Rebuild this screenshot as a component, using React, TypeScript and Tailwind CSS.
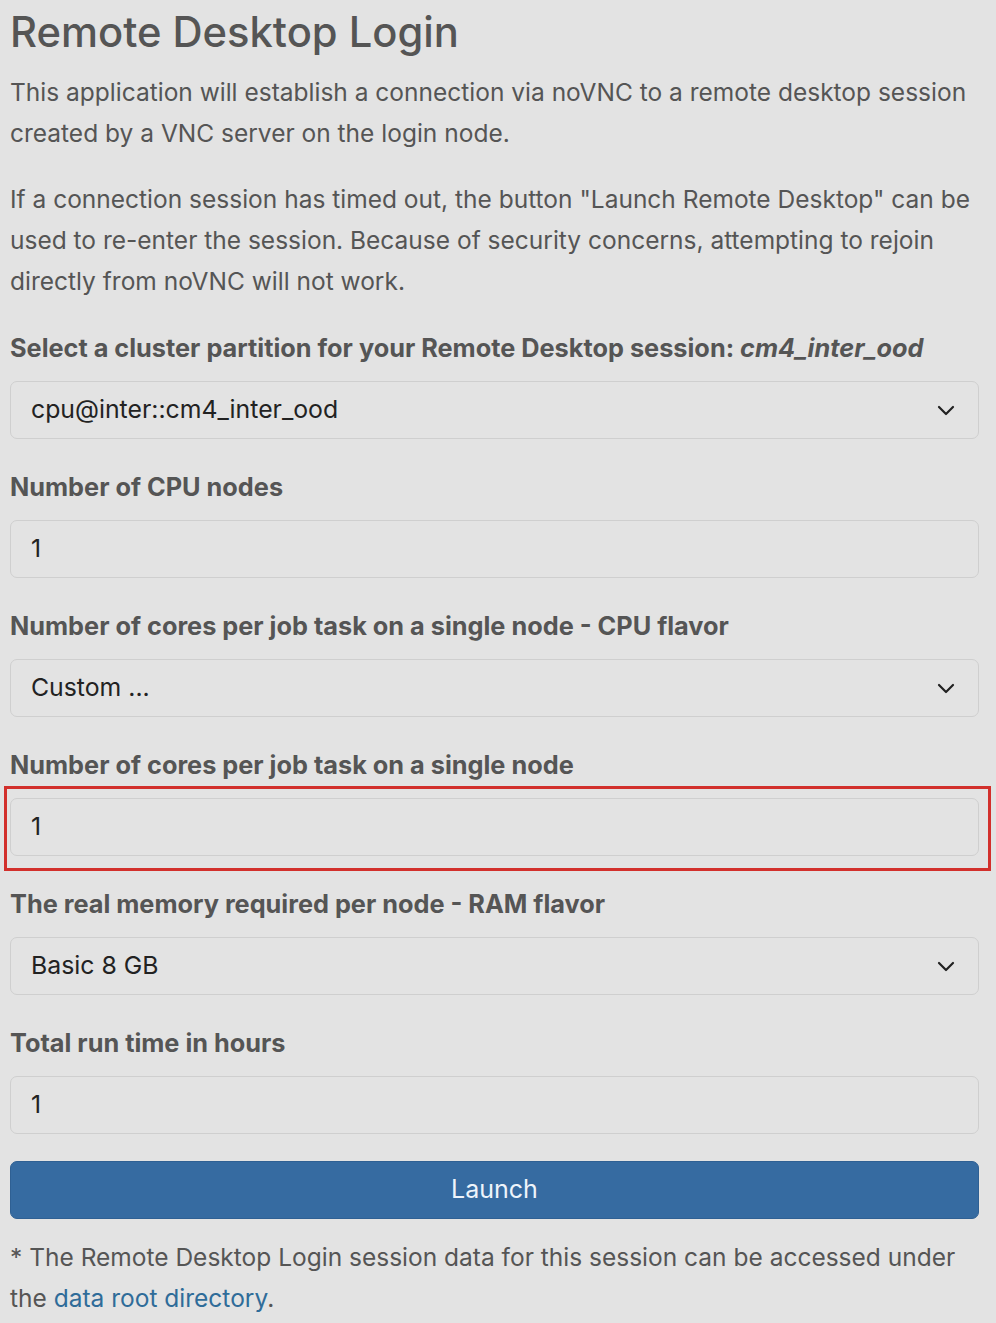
import React from "react";

const Chevron = () => (
  <svg width="18" height="11" viewBox="0 0 18 11" fill="none" className="shrink-0">
    <path d="M2 2l7 7 7-7" stroke="#222" strokeWidth="2.2" strokeLinecap="round" strokeLinejoin="round" />
  </svg>
);

const Label = ({ children }: { children: React.ReactNode }) => (
  <div className="h-[41px] flex items-center font-bold text-[25.3px] text-[#555] leading-[41px] whitespace-nowrap">{children}</div>
);

const Box = ({ value, select }: { value: string; select?: boolean }) => (
  <div className="h-[58px] rounded-[7px] border border-[#cfcfcf] flex items-center justify-between pl-[20px] pr-[23px] text-[24.8px] text-[#222]">
    <span>{value}</span>
    {select ? <Chevron /> : null}
  </div>
);

const Group = ({ label, children }: { label: React.ReactNode; children: React.ReactNode }) => (
  <div className="mt-[27px] flex flex-col gap-[13px]">
    <Label>{label}</Label>
    {children}
  </div>
);

export default function App() {
  return (
    <div className="min-h-[1323px] w-[996px] bg-[#e3e3e3] text-[#555] pl-[10px] pr-[17px] overflow-hidden" style={{ fontFamily: "Inter, 'Liberation Sans', sans-serif" }}>
      <h1 className="text-[41.7px] font-medium leading-[48px] pt-[8px] text-[#555] whitespace-nowrap">Remote Desktop Login</h1>
      <div className="text-[24.5px] leading-[41px] mt-[16px]">
        <p>This application will establish a connection via noVNC to a remote desktop session created by a VNC server on the login node.</p>
        <p className="mt-[25px]">
          If a connection session has timed out, the button "Launch Remote Desktop" can be used to re-enter the session. Because of security concerns, attempting to rejoin directly from noVNC will not work.
        </p>
      </div>
      <div className="mt-[-2px]">
        <Group
          label={
            <>
              Select a cluster partition for your Remote Desktop session:&nbsp;<i>cm4_inter_ood</i>
            </>
          }
        >
          <Box value="cpu@inter::cm4_inter_ood" select />
        </Group>
      </div>
      <Group label="Number of CPU nodes">
        <Box value="1" />
      </Group>
      <Group label="Number of cores per job task on a single node - CPU flavor">
        <Box value="Custom ..." select />
      </Group>
      <Group label="Number of cores per job task on a single node">
        <div className="relative">
          <Box value="1" />
          <div className="absolute left-[-6px] right-[-12px] top-[-12px] bottom-[-15px] border-[3px] border-[#d2302c] pointer-events-none" />
        </div>
      </Group>
      <Group label="The real memory required per node - RAM flavor">
        <Box value="Basic 8 GB" select />
      </Group>
      <Group label="Total run time in hours">
        <Box value="1" />
      </Group>
      <button className="mt-[27px] w-full h-[58px] rounded-[7px] bg-[#366ba1] border border-[#2f6093] text-[#eef4fb] text-[25px] flex items-center justify-center">
        Launch
      </button>
      <p className="text-[24.5px] leading-[41px] mt-[18px]">
        * The Remote Desktop Login session data for this session can be accessed under the <span className="text-[#2f6c99]">data root directory</span>.
      </p>
    </div>
  );
}
